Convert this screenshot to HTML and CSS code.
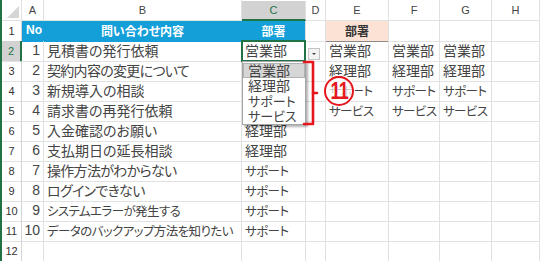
FILE: index.html
```html
<!DOCTYPE html>
<html lang="ja">
<head>
    <meta charset="UTF-8">
    <title>部署リスト</title>
    <link rel="stylesheet" href="styles.css">
</head>
<body>
<div class="sheet">
    <div class="row head">
        <div class="corner"><span class="tri"></span></div>
        <div class="ch">A</div>
        <div class="ch">B</div>
        <div class="ch sel">C</div>
        <div class="ch">D</div>
        <div class="ch">E</div>
        <div class="ch">F</div>
        <div class="ch">G</div>
        <div class="ch">H</div>
    </div>
    <div class="row">
        <div class="rh">1</div>
        <div class="c blue">No</div>
        <div class="c blue mid">問い合わせ内容</div>
        <div class="c blue mid last">部署</div>
        <div class="c"></div>
        <div class="c peach">部署</div>
        <div class="c"></div><div class="c"></div><div class="c"></div>
    </div>
    <div class="row">
        <div class="rh sel">2</div>
        <div class="c num">1</div>
        <div class="c">見積書の発行依頼</div>
        <div class="c active">営業部</div>
        <div class="c"></div>
        <div class="c">営業部</div>
        <div class="c">営業部</div>
        <div class="c">営業部</div>
        <div class="c"></div>
    </div>
    <div class="row">
        <div class="rh">3</div>
        <div class="c num">2</div>
        <div class="c snug">契約内容の変更について</div>
        <div class="c"></div>
        <div class="c"></div>
        <div class="c">経理部</div>
        <div class="c">経理部</div>
        <div class="c">経理部</div>
        <div class="c"></div>
    </div>
    <div class="row">
        <div class="rh">4</div>
        <div class="c num">3</div>
        <div class="c">新規導入の相談</div>
        <div class="c"></div>
        <div class="c"></div>
        <div class="c kana">サポート</div>
        <div class="c kana">サポート</div>
        <div class="c kana">サポート</div>
        <div class="c"></div>
    </div>
    <div class="row">
        <div class="rh">5</div>
        <div class="c num">4</div>
        <div class="c">請求書の再発行依頼</div>
        <div class="c"></div>
        <div class="c"></div>
        <div class="c kana">サービス</div>
        <div class="c kana">サービス</div>
        <div class="c kana">サービス</div>
        <div class="c"></div>
    </div>
    <div class="row">
        <div class="rh">6</div>
        <div class="c num">5</div>
        <div class="c">入金確認のお願い</div>
        <div class="c">経理部</div>
        <div class="c"></div><div class="c"></div><div class="c"></div><div class="c"></div><div class="c"></div>
    </div>
    <div class="row">
        <div class="rh">7</div>
        <div class="c num">6</div>
        <div class="c">支払期日の延長相談</div>
        <div class="c">経理部</div>
        <div class="c"></div><div class="c"></div><div class="c"></div><div class="c"></div><div class="c"></div>
    </div>
    <div class="row">
        <div class="rh">8</div>
        <div class="c num">7</div>
        <div class="c snug">操作方法がわからない</div>
        <div class="c kana">サポート</div>
        <div class="c"></div><div class="c"></div><div class="c"></div><div class="c"></div><div class="c"></div>
    </div>
    <div class="row">
        <div class="rh">9</div>
        <div class="c num">8</div>
        <div class="c snug">ログインできない</div>
        <div class="c kana">サポート</div>
        <div class="c"></div><div class="c"></div><div class="c"></div><div class="c"></div><div class="c"></div>
    </div>
    <div class="row">
        <div class="rh">10</div>
        <div class="c num">9</div>
        <div class="c kana">システムエラーが発生する</div>
        <div class="c kana">サポート</div>
        <div class="c"></div><div class="c"></div><div class="c"></div><div class="c"></div><div class="c"></div>
    </div>
    <div class="row">
        <div class="rh">11</div>
        <div class="c num">10</div>
        <div class="c kana">データのバックアップ方法を知りたい</div>
        <div class="c kana">サポート</div>
        <div class="c"></div><div class="c"></div><div class="c"></div><div class="c"></div><div class="c"></div>
    </div>
    <div class="row">
        <div class="rh">12</div>
        <div class="c"></div><div class="c"></div><div class="c"></div><div class="c"></div>
        <div class="c"></div><div class="c"></div><div class="c"></div><div class="c"></div>
    </div>

    <!-- dropdown of the validation list -->
    <div class="drop-btn"><span class="arrow"></span></div>
    <ul class="drop-list">
        <li class="hover">営業部</li>
        <li>経理部</li>
        <li class="kana">サポート</li>
        <li class="kana">サービス</li>
    </ul>

    <svg class="bracket" width="20" height="72" viewBox="0 0 20 72">
        <path d="M2 4 H11 V66 H2" fill="none" stroke="#e5171c" stroke-width="2.6" stroke-linejoin="round" stroke-linecap="round"/>
        <path d="M11 35 H15" fill="none" stroke="#e5171c" stroke-width="2.6" stroke-linecap="round"/>
    </svg>
    <div class="badge"><span>11</span></div>
</div>
</body>
</html>
```

FILE: styles.css
```css
body {
    margin: 0;
    background: #fff;
    font-family: "Noto Sans CJK JP", "Liberation Sans", sans-serif;
    color: #444;
}
.sheet {
    position: relative;
    width: 538px;
    border-left: 2px solid #217346;
}
.row {
    display: grid;
    grid-template-columns: 20px 22px 198px 64px 20px 63px 51px 52px 48px;
    height: 20px;
}
.row.head {
    height: 21px;
}
.row > div {
    box-sizing: border-box;
    border-right: 1px solid #e1e1e1;
    border-bottom: 1px solid #e1e1e1;
    white-space: nowrap;
}
.corner {
    position: relative;
    background: #fff;
}
.tri {
    position: absolute;
    right: 2px;
    bottom: 2px;
    width: 0;
    height: 0;
    border-left: 12px solid transparent;
    border-bottom: 12px solid #d6d6d6;
}
.ch {
    font-family: "Liberation Sans", sans-serif;
    font-size: 11px;
    color: #444;
    text-align: center;
    line-height: 20px;
}
.ch.sel {
    background: #d2d2d2;
    color: #217346;
    border-bottom: 2px solid #217346 !important;
    line-height: 18px;
    margin-top: 1px;
}
.rh {
    font-family: "Liberation Sans", sans-serif;
    font-size: 11px;
    color: #333;
    text-align: center;
    line-height: 20px;
    border-right-color: #d4d4d4 !important;
}
.rh.sel {
    background: #d2d2d2;
    color: #217346;
    border-right: 2px solid #217346 !important;
}
.c {
    font-size: 14px;
    line-height: 19px;
    padding-left: 3px;
    font-feature-settings: "palt";
}
.c.snug {
    letter-spacing: -0.7px;
}
.kana {
    font-size: 12.5px;
    letter-spacing: -0.6px;
}
.c.num {
    text-align: right;
    padding: 0 3px 0 0;
    font-family: "Liberation Sans", sans-serif;
    font-size: 14px;
}
.c.blue {
    background: #149fd9;
    color: #fff;
    font-weight: bold;
    font-size: 12px;
    border-color: #149fd9;
    font-family: "Liberation Sans", "Noto Sans CJK JP", sans-serif;
    padding-left: 4px;
}
.c.blue.mid {
    font-family: "Noto Sans CJK JP", sans-serif;
    text-align: center;
    padding-left: 0;
}
.c.blue.last {
    border-right-color: #e1e1e1;
}
.c.peach {
    background: #fbe2d5;
    color: #333;
    font-weight: bold;
    font-size: 12px;
    text-align: center;
    padding-left: 0;
    border-bottom: 1px solid #8a8a8a;
}
.c.active {
    position: relative;
}
.c.active::after {
    content: "";
    position: absolute;
    left: -1px;
    top: -1px;
    right: -1px;
    bottom: -1px;
    border: 2px solid #217346;
}
.drop-btn {
    position: absolute;
    left: 306px;
    top: 48px;
    width: 10px;
    height: 10px;
    background: #f3f3f3;
    border: 1px solid #c4c4c4;
}
.arrow {
    position: absolute;
    left: 3px;
    top: 4px;
    border-left: 2px solid transparent;
    border-right: 2px solid transparent;
    border-top: 2px solid #444;
}
.drop-list {
    position: absolute;
    left: 240px;
    top: 61px;
    width: 62px;
    margin: 0;
    padding: 1px 0;
    list-style: none;
    background: #fff;
    border: 1px solid #a6a6a6;
    box-shadow: 2px 2px 2px rgba(0, 0, 0, 0.3);
}
.drop-list li {
    height: 15px;
    line-height: 15px;
    font-size: 14px;
    padding-left: 5px;
    font-feature-settings: "palt";
    box-sizing: border-box;
}
.drop-list li.kana {
    font-size: 13px;
    letter-spacing: 0;
}
.drop-list li.hover {
    background: #d6d6d6;
    border: 1px solid #b2b2b2;
    padding-left: 4px;
    line-height: 13px;
}
.bracket {
    position: absolute;
    left: 300px;
    top: 58px;
}
.badge {
    position: absolute;
    left: 322px;
    top: 76px;
    width: 26px;
    height: 26px;
    border: 2px solid #e5171c;
    border-radius: 50%;
    background: rgba(255, 255, 255, 0.72);
    box-shadow: 0 0 0 1px #fff;
    color: #e5171c;
    text-align: center;
}
.badge span {
    display: inline-block;
    font-family: "Liberation Sans", sans-serif;
    font-size: 23px;
    font-weight: bold;
    line-height: 26px;
    letter-spacing: -1px;
    transform: scaleX(0.78);
}
```
